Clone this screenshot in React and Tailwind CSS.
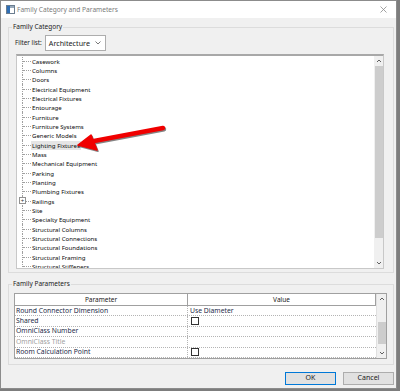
import React from "react";

const items = [
  "Casework","Columns","Doors","Electrical Equipment","Electrical Fixtures","Entourage","Furniture","Furniture Systems","Generic Models","Lighting Fixtures","Mass","Mechanical Equipment","Parking","Planting","Plumbing Fixtures","Railings","Site","Specialty Equipment","Structural Columns","Structural Connections","Structural Foundations","Structural Framing","Structural Stiffeners",
];

const params = [
  { name: "Round Connector Dimension", value: "Use Diameter" },
  { name: "Shared", check: true },
  { name: "OmniClass Number" },
  { name: "OmniClass Title", dim: true },
  { name: "Room Calculation Point", check: true },
];

function TreeRow({ label }) {
  const sel = label === "Lighting Fixtures";
  const plus = label === "Railings";
  return (
    <div className="flex h-[9.33px] items-center">
      <div className="w-[5px]" />
      <div className="relative flex h-full w-[9px] items-center border-l border-dotted border-[#a0a0a0]">
        <div className="h-0 w-full border-t border-dotted border-[#a0a0a0]" />
        {plus && (
          <div className="absolute left-[-4px] top-[1px] flex h-[7px] w-[7px] items-center justify-center border border-[#919191] bg-white text-[6px] leading-none text-[#333]">
            +
          </div>
        )}
      </div>
      <div className={"px-[1px] leading-[9px] " + (sel ? "bg-[#e5e5e5]" : "")}>{label}</div>
    </div>
  );
}

export default function App() {
  return (
    <div className="relative flex h-[391px] w-[400px] bg-[#7d7d7d] pb-[2px] pr-[3px] text-[#1a1a1a]" style={{ fontFamily: '"Noto Sans", "Open Sans", sans-serif' }}>
      <div className="flex flex-1 flex-col border border-[#8c8c8c] bg-[#f0f0f0]">
        {/* title bar */}
        <div className="flex h-[17px] items-center bg-white">
          <svg width="9" height="9" viewBox="0 0 9 9" className="ml-[5px]">
            <rect x="0.5" y="0.5" width="8" height="8" fill="#fff" stroke="#6b7d8f" />
            <rect x="1" y="1" width="3" height="7" fill="#2f6fb6" />
            <rect x="4" y="1" width="4" height="2" fill="#9ab" />
          </svg>
          <div className="ml-[2px] text-[6.6px] text-[#7a7a7a]">Family Category and Parameters</div>
          <div className="flex-1" />
          <svg width="7" height="7" viewBox="0 0 7 7" className="mr-[9px]">
            <path d="M0.5 0.5 L6.5 6.5 M6.5 0.5 L0.5 6.5" stroke="#8a8a8a" strokeWidth="0.8" />
          </svg>
        </div>

        {/* group 1 */}
        <div className="relative ml-[7px] mr-[2px] mt-[9px] flex h-[246px] flex-col border border-[#dcdcdc]">
          <div className="absolute left-[3px] top-[-6px] bg-[#f0f0f0] px-[1px] text-[6.5px] leading-[10px]">Family Category</div>
          <div className="ml-[6px] mt-[7px] flex items-center">
            <div className="text-[6.3px]">Filter list:</div>
            <div className="ml-[3px] flex h-[16px] w-[61px] items-center border border-[#adadad] bg-white pl-[3px] pr-[4px]">
              <div className="flex-1 text-[7.2px]">Architecture</div>
              <svg width="6" height="4" viewBox="0 0 6 4">
                <path d="M0.5 0.5 L3 3 L5.5 0.5" stroke="#555" strokeWidth="0.8" fill="none" />
              </svg>
            </div>
          </div>
          <div className="mb-[3px] ml-[7px] mr-[9px] mt-[3px] flex flex-1 overflow-hidden border border-t-2 border-[#c8c8c8] border-t-[#a8a8a8] bg-white">
            <div className="flex-1 overflow-hidden pt-[0.5px] text-[6.1px] text-[#0a0a0a]">
              {items.map((it) => (
                <TreeRow key={it} label={it} />
              ))}
            </div>
            <div className="flex w-[9px] flex-col items-center bg-[#f0f0f0]">
              <svg width="6" height="10" viewBox="0 0 6 10">
                <path d="M1 6 L3 4 L5 6" stroke="#606060" strokeWidth="1" fill="none" />
              </svg>
              <div className="w-[8px] flex-1 bg-[#cdcdcd]" />
              <div className="h-[20px]" />
              <svg width="6" height="10" viewBox="0 0 6 10">
                <path d="M1 4 L3 6 L5 4" stroke="#606060" strokeWidth="1" fill="none" />
              </svg>
            </div>
          </div>
        </div>

        {/* group 2 */}
        <div className="relative ml-[7px] mr-[2px] mt-[11px] flex h-[81px] flex-col border border-[#dcdcdc]">
          <div className="absolute left-[3px] top-[-6px] bg-[#f0f0f0] px-[1px] text-[6.5px] leading-[10px]">Family Parameters</div>
          <div className="mb-[5px] ml-[5px] mr-[6px] mt-[8px] flex flex-1 border border-[#a0a0a0] bg-white">
            <div className="flex flex-1 flex-col">
              <div className="flex h-[12px] border-b border-[#a0a0a0] text-[6.5px]">
                <div className="flex w-[173px] items-center justify-center border-r border-[#a0a0a0]">Parameter</div>
                <div className="flex flex-1 items-center justify-center border-r border-[#a0a0a0]">Value</div>
              </div>
              {params.map((p) => (
                <div key={p.name} className="flex h-[10.4px] border-b border-dotted border-[#b4b4b4] text-[6.8px]">
                  <div className={"flex w-[173px] items-center border-r border-dotted border-[#b4b4b4] pl-[1px] " + (p.dim ? "text-[#a0a0a0]" : "text-[#1c2a48]")}>{p.name}</div>
                  <div className="flex flex-1 items-center pl-[2px] text-[#1c2a48]">
                    {p.value}
                    {p.check && <div className="ml-[1px] h-[8px] w-[8px] border border-[#333] bg-white" />}
                  </div>
                </div>
              ))}
            </div>
            <div className="flex w-[10px] flex-col items-center border-l border-[#e0e0e0] bg-[#f0f0f0]">
              <svg width="6" height="10" viewBox="0 0 6 10">
                <path d="M1 6 L3 4 L5 6" stroke="#606060" strokeWidth="1" fill="none" />
              </svg>
              <div className="h-[18px]" />
              <div className="h-[22px] w-[8px] bg-[#cdcdcd]" />
              <div className="flex-1" />
              <svg width="6" height="10" viewBox="0 0 6 10">
                <path d="M1 4 L3 6 L5 4" stroke="#606060" strokeWidth="1" fill="none" />
              </svg>
            </div>
          </div>
        </div>

        {/* buttons */}
        <div className="mr-[2px] mt-[7px] flex justify-end gap-[7px]">
          <div className="flex h-[13px] w-[51px] items-center justify-center border border-[#0078d7] bg-[#e1e1e1] text-[7px]">OK</div>
          <div className="flex h-[13px] w-[51px] items-center justify-center border border-[#adadad] bg-[#e1e1e1] text-[7px]">Cancel</div>
        </div>
      </div>

      {/* red arrow */}
      <svg className="pointer-events-none absolute left-0 top-0" width="400" height="391" viewBox="0 0 400 391">
        <g transform="translate(1,1.2)" opacity="0.55">
          <path d="M163 128 L94 141" stroke="#202020" strokeWidth="4.5" strokeLinecap="round" />
          <path d="M78 145 L91 135 L97 150 Z" fill="#202020" stroke="#202020" strokeWidth="1.5" strokeLinejoin="round" />
        </g>
        <path d="M163 128 L94 141" stroke="#f00000" strokeWidth="4.5" strokeLinecap="round" />
        <path d="M78 145 L91 135 L97 150 Z" fill="#f00000" stroke="#f00000" strokeWidth="1.5" strokeLinejoin="round" />
      </svg>
    </div>
  );
}
